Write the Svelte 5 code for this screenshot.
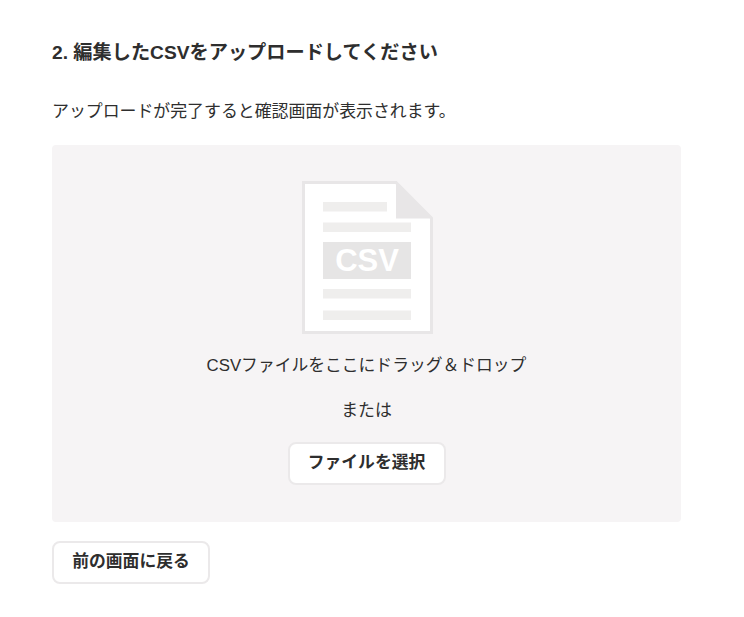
<script lang="ts">
  const lines = [
    { x: 21, y: 21, w: 64 },
    { x: 21, y: 41.5, w: 88 },
    { x: 21, y: 108, w: 88 },
    { x: 21, y: 129.5, w: 88 },
  ];
</script>

<main class="page">
  <h2 class="title">2. 編集したCSVをアップロードしてください</h2>
  <p class="lead">アップロードが完了すると確認画面が表示されます。</p>

  <section class="dropzone">
    <svg class="doc" width="132" height="154" viewBox="0 0 132 154" aria-hidden="true">
      <path d="M1.5 1.5H94L129.5 37V151.5H1.5Z" fill="#fff" stroke="#e8e6e7" stroke-width="3" />
      <path d="M94 1.5L130 37.5H94Z" fill="#e8e6e7" />
      {#each lines as line}
        <rect x={line.x} y={line.y} width={line.w} height="9.5" fill="#efeeed" />
      {/each}
      <rect x="21" y="61" width="88" height="37" fill="#e6e5e5" />
      <text class="doc-label" x="65" y="90" text-anchor="middle">CSV</text>
    </svg>
    <p class="drop-text">CSVファイルをここにドラッグ＆ドロップ</p>
    <p class="or">または</p>
    <button class="btn" type="button">ファイルを選択</button>
  </section>

  <button class="btn back" type="button">前の画面に戻る</button>
</main>

<style>
  :global(body) {
    margin: 0;
    background: #fff;
  }
  .page {
    padding: 39px 63px 33px 52px;
    font-family: "Liberation Sans", "Noto Sans CJK JP", sans-serif;
    color: #2e2e2e;
  }
  .title {
    margin: 0;
    font-size: 19.2px;
    line-height: 27px;
    font-weight: 700;
  }
  .lead {
    margin: 34px 0 0;
    font-size: 16.9px;
    line-height: 24px;
    font-weight: 400;
  }
  .dropzone {
    display: flex;
    flex-direction: column;
    align-items: center;
    margin-top: 21px;
    padding: 36px 0;
    height: 305px;
    background: #f6f4f5;
    border-radius: 4px;
  }
  .doc {
    display: block;
    flex: none;
    margin-left: 2px;
  }
  .doc-label {
    fill: #fff;
    font-family: "Liberation Sans", sans-serif;
    font-size: 31px;
    font-weight: 700;
  }
  .drop-text {
    margin: 19px 0 0;
    font-size: 16.8px;
    line-height: 24px;
    font-weight: 400;
  }
  .or {
    margin: 21px 0 0;
    font-size: 16.9px;
    line-height: 24px;
    font-weight: 400;
  }
  .btn {
    display: block;
    margin-top: 19px;
    width: 158px;
    height: 43px;
    padding: 0 0 2px;
    background: #fff;
    border: 2px solid #ebe9ea;
    border-radius: 8px;
    font: 700 16.8px/24px "Liberation Sans", "Noto Sans CJK JP", sans-serif;
    color: #2e2e2e;
  }
  .back {
    margin-top: 19px;
  }
</style>
